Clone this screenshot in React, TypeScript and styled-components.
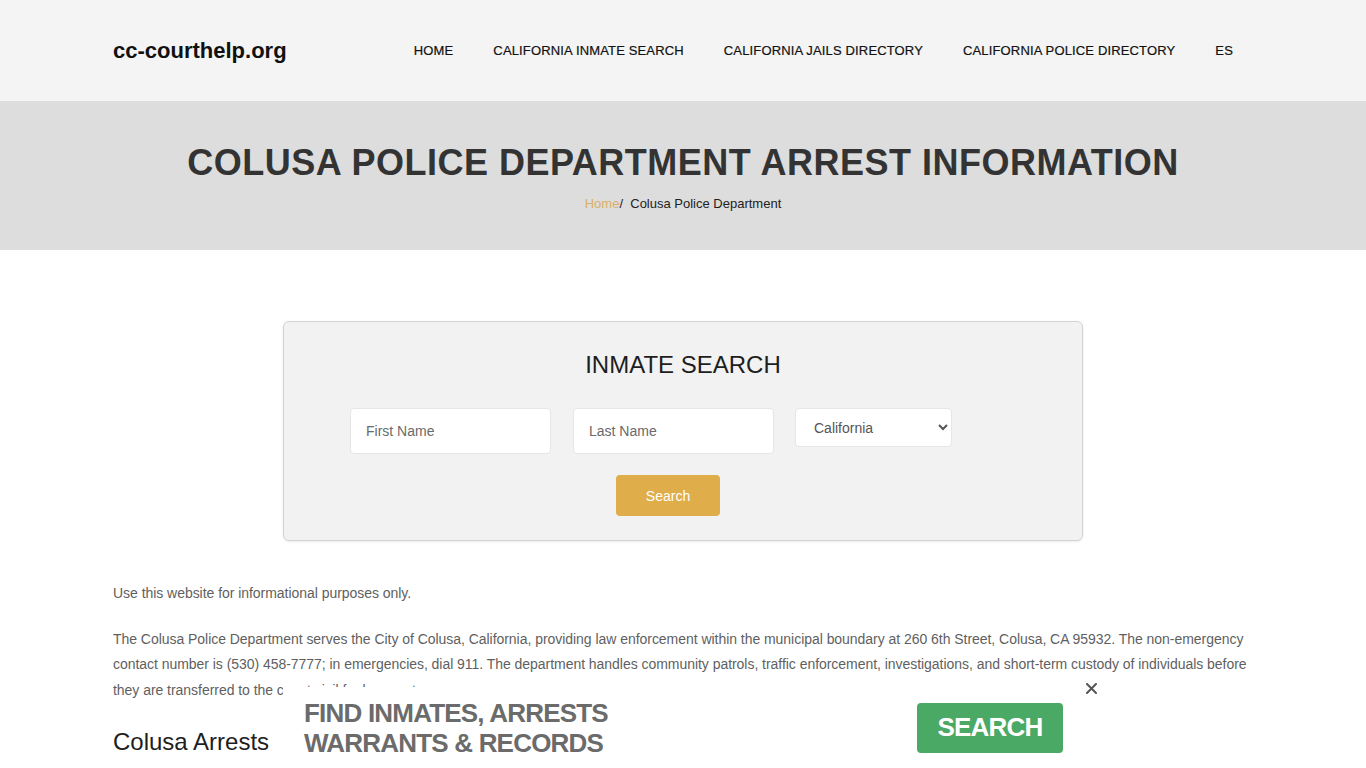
import React, { useState } from 'react';
import styled, { createGlobalStyle } from 'styled-components';

const GlobalStyle = createGlobalStyle`
  html, body {
    margin: 0;
    padding: 0;
  }
  body {
    font-family: 'Liberation Sans', Arial, sans-serif;
    background-color: #fff;
    color: #222;
    overflow: hidden;
  }
  * {
    box-sizing: border-box;
  }
`;

const Container = styled.div`
  width: 1140px;
  margin: 0 auto;
`;

// 상단 헤더
const Header = styled.header`
  background-color: #f4f4f4;
  height: 101px;
`;

const HeaderInner = styled(Container)`
  display: flex;
  align-items: center;
  justify-content: space-between;
  height: 100%;
`;

const Logo = styled.a`
  font-size: 22px;
  font-weight: 700;
  color: #111;
  text-decoration: none;
`;

const Nav = styled.nav`
  display: flex;
  align-items: center;
`;

const NavLink = styled.a`
  padding: 0 20px;
  font-size: 13px;
  color: #111;
  text-decoration: none;
  text-transform: uppercase;
  letter-spacing: 0.15px;
  -webkit-text-stroke: 0.2px #111;
`;

// 타이틀 영역
const Hero = styled.section`
  background-color: #dddddd;
  height: 149px;
  display: flex;
  flex-direction: column;
  align-items: center;
  padding-top: 42px;
`;

const Title = styled.h1`
  margin: 0;
  font-size: 36px;
  line-height: 40px;
  font-weight: 700;
  letter-spacing: 0.5px;
  color: #333;
`;

const Breadcrumb = styled.div`
  margin-top: 12px;
  font-size: 13px;
  line-height: 18px;
  color: #222;
`;

const Crumb = styled.a`
  color: #d9b067;
  text-decoration: none;
`;

const Main = styled(Container)`
  padding-top: 71px;
`;

// 검색 카드
const SearchCard = styled.div`
  width: 800px;
  height: 220px;
  margin: 0 auto;
  background-color: #f2f2f2;
  border: 1px solid #d3d3d3;
  border-radius: 6px;
  box-shadow: 0 1px 3px rgba(0, 0, 0, 0.08);
  padding-top: 29px;
  display: flex;
  flex-direction: column;
`;

const CardTitle = styled.h2`
  margin: 0;
  text-align: center;
  font-size: 24px;
  line-height: 28px;
  font-weight: 400;
  color: #1e1e1e;
`;

const Form = styled.form`
  width: 636px;
  margin: 29px 0 0 66px;
  display: flex;
  flex-direction: column;
  align-items: center;
`;

const FieldRow = styled.div`
  align-self: stretch;
  display: flex;
  align-items: flex-start;
  gap: 22px;
`;

const TextInput = styled.input`
  width: 201px;
  height: 46px;
  padding: 0 15px;
  border: 1px solid #e6e6e6;
  border-radius: 4px;
  background: #fff;
  font-family: 'Liberation Sans', Arial, sans-serif;
  font-size: 14px;
  color: #333;
  outline: none;

  &::placeholder {
    color: #6a6a6a;
  }
`;

const StateSelect = styled.select`
  width: 157px;
  height: 39px;
  margin-left: -1px;
  padding: 0 14px;
  border: 1px solid #e6e6e6;
  border-radius: 4px;
  background: #fff;
  font-family: 'Liberation Sans', Arial, sans-serif;
  font-size: 14px;
  color: #555;
  outline: none;
`;

const GoldButton = styled.button`
  margin-top: 21px;
  width: 104px;
  height: 41px;
  border: none;
  border-radius: 4px;
  background-color: #dfae4a;
  color: #fff;
  font-family: 'Liberation Sans', Arial, sans-serif;
  font-size: 14px;
  cursor: pointer;
`;

const Text = styled.p`
  margin: 0 0 20px;
  font-size: 14px;
  line-height: 25.5px;
  letter-spacing: -0.04px;
  color: #5f5f5f;
`;

const Intro = styled(Text)`
  margin-top: 40px;
`;

const SectionTitle = styled.h3`
  margin: 24px 0 0;
  font-size: 24px;
  line-height: 29px;
  font-weight: 400;
  color: #1e1e1e;
`;

// 하단 광고 배너
const Banner = styled.div`
  position: fixed;
  left: 283px;
  bottom: 0;
  width: 800px;
  height: 81px;
  background-color: #fff;
  display: flex;
  align-items: center;
  justify-content: space-between;
  padding: 0 20px 0 21px;
`;

const BannerText = styled.div`
  font-size: 26px;
  line-height: 30px;
  font-weight: 700;
  letter-spacing: -0.8px;
  color: #6b6b6b;
  text-transform: uppercase;
`;

const GreenButton = styled.button`
  width: 146px;
  height: 50px;
  border: none;
  border-radius: 4px;
  background-color: #4aa964;
  color: #fff;
  font-family: 'Liberation Sans', Arial, sans-serif;
  font-size: 26px;
  font-weight: 700;
  letter-spacing: -0.8px;
  cursor: pointer;
`;

const CloseBtn = styled.button`
  position: absolute;
  top: -6px;
  right: -15px;
  width: 14px;
  height: 14px;
  padding: 0;
  border: none;
  background: none;
  cursor: pointer;
  display: flex;
  align-items: center;
  justify-content: center;
`;

function App() {
  const [firstName, setFirstName] = useState('');
  const [lastName, setLastName] = useState('');
  const [showBanner, setShowBanner] = useState(true);

  const navItems = [
    'Home',
    'California Inmate Search',
    'California Jails Directory',
    'California Police Directory',
    'ES',
  ];

  return (
    <>
      <GlobalStyle />
      <Header>
        <HeaderInner>
          <Logo href="#">cc-courthelp.org</Logo>
          <Nav>
            {navItems.map((item) => (
              <NavLink key={item} href="#">
                {item}
              </NavLink>
            ))}
          </Nav>
        </HeaderInner>
      </Header>
      <Hero>
        <Title>COLUSA POLICE DEPARTMENT ARREST INFORMATION</Title>
        <Breadcrumb>
          <Crumb href="#">Home</Crumb>/&nbsp; Colusa Police Department
        </Breadcrumb>
      </Hero>
      <Main>
        <SearchCard>
          <CardTitle>INMATE SEARCH</CardTitle>
          <Form onSubmit={(e) => e.preventDefault()}>
            <FieldRow>
              <TextInput
                type="text"
                placeholder="First Name"
                value={firstName}
                onChange={(e) => setFirstName(e.target.value)}
              />
              <TextInput
                type="text"
                placeholder="Last Name"
                value={lastName}
                onChange={(e) => setLastName(e.target.value)}
              />
              <StateSelect defaultValue="CA">
                <option value="CA">California</option>
              </StateSelect>
            </FieldRow>
            <GoldButton type="submit">Search</GoldButton>
          </Form>
        </SearchCard>
        <Intro>Use this website for informational purposes only.</Intro>
        <Text>
          The Colusa Police Department serves the City of Colusa, California, providing law enforcement within the
          municipal boundary at 260 6th Street, Colusa, CA 95932. The non-emergency contact number is (530) 458-7777; in
          emergencies, dial 911. The department handles community patrols, traffic enforcement, investigations, and
          short-term custody of individuals before they are transferred to the county jail for longer stays.
        </Text>
        <SectionTitle>Colusa Arrests</SectionTitle>
      </Main>
      {showBanner ? (
        <Banner>
          <BannerText>
            Find Inmates, Arrests
            <br />
            Warrants &amp; Records
          </BannerText>
          <GreenButton type="button">SEARCH</GreenButton>
          <CloseBtn type="button" onClick={() => setShowBanner(false)}>
            <svg width="11" height="11" viewBox="0 0 11 11">
              <path d="M1 1L10 10M10 1L1 10" stroke="#555" strokeWidth="2" strokeLinecap="round" />
            </svg>
          </CloseBtn>
        </Banner>
      ) : null}
    </>
  );
}

export default App;
